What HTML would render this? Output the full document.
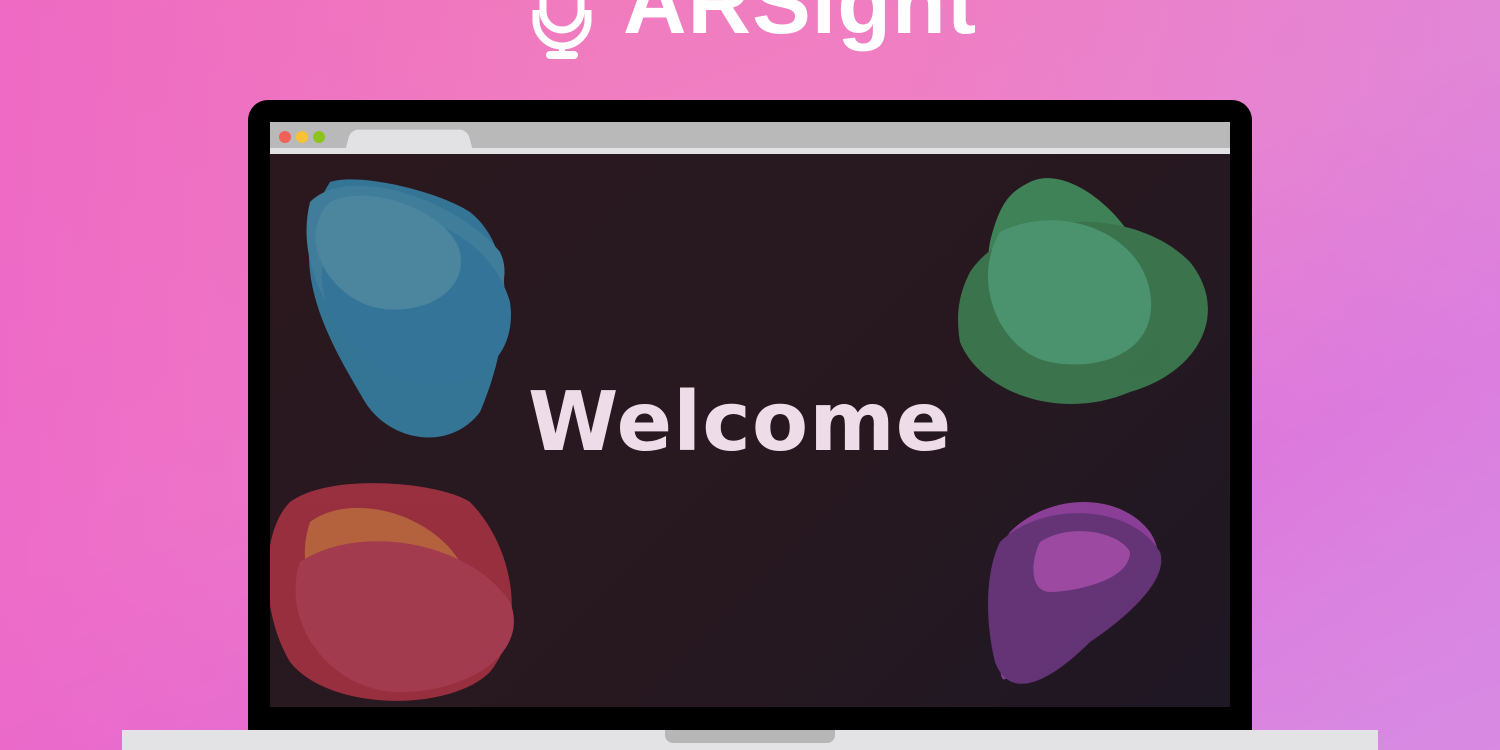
<!DOCTYPE html>
<html><head><style>
body{margin:0;width:1500px;height:750px;overflow:hidden;background:linear-gradient(160deg,#f27ab8 0%,#ee80c8 45%,#e070d8 70%,#d98ae0 100%);position:relative;font-family:"Liberation Sans",sans-serif}
.bg{position:absolute;inset:0;background:linear-gradient(90deg,rgba(236,99,200,.7) 0%,rgba(0,0,0,0) 40%,rgba(0,0,0,0) 60%,rgba(214,140,230,.5) 100%)}
.title{position:absolute;left:623px;top:-48px;font-size:88px;font-weight:bold;color:#fff;letter-spacing:1px}
.laptop{position:absolute;left:248px;top:100px;width:1004px;height:640px;background:#000;border-radius:20px 20px 0 0}
.screen{position:absolute;left:270px;top:122px;width:960px;height:585px;background:linear-gradient(135deg,#2a181e,#271820 60%,#1e1724);overflow:hidden}
.bar{position:absolute;left:0;top:0;width:960px;height:26px;background:#b9b9b9}
.strip{position:absolute;left:0;top:26px;width:960px;height:6px;background:#e2e2e4}
.tab{position:absolute;left:78px;top:7px;width:122px;height:22px;background:#e2e2e4;border-radius:8px 8px 0 0;transform:perspective(40px) rotateX(10deg)}
.dot{position:absolute;top:9px;width:12px;height:12px;border-radius:50%}
.base{position:absolute;left:122px;top:730px;width:1256px;height:20px;background:#e3e3e5}
.notch{position:absolute;left:665px;top:730px;width:170px;height:13px;background:#b6b6b6;border-radius:0 0 8px 8px}
.welcome{position:absolute;left:528px;top:375px;font-family:"DejaVu Sans",sans-serif;font-weight:bold;font-size:82px;color:#eedde8;letter-spacing:1px}
</style></head><body>
<div class="bg"></div>
<svg style="position:absolute;left:530px;top:0" width="70" height="62" viewBox="0 0 70 62"><rect x="13" y="-25" width="38" height="55" rx="19" fill="none" stroke="#fff" stroke-width="7"/><path d="M6 10 v10 a26 26 0 0 0 52 0 v-10" fill="none" stroke="#fff" stroke-width="7"/><rect x="29" y="44" width="6" height="10" fill="#fff"/><rect x="16" y="51" width="32" height="8" rx="4" fill="#fff"/></svg>
<div class="title">ARSight</div>
<div class="laptop"></div>
<div class="screen">
<div class="bar"></div><div class="strip"></div><div class="tab"></div>
<div class="dot" style="left:9px;background:#f2605a"></div>
<div class="dot" style="left:26px;background:#f8c234"></div>
<div class="dot" style="left:43px;background:#8cc41c"></div>
<svg style="position:absolute;left:0;top:0" width="960" height="585">
<g opacity=".7">
<path d="M60 60 C90 50 170 70 200 90 C250 130 240 220 210 290 C180 330 120 320 95 280 C60 220 10 140 60 60Z" fill="#3a9cc8"/>
<path d="M40 80 C80 40 190 80 230 130 C250 170 200 230 150 240 C90 250 20 160 40 80Z" fill="#4aa8d0"/>
<path d="M70 110 C130 70 220 110 240 180 C250 250 180 280 120 250 C60 220 30 150 70 110Z" fill="#3a9ccc"/>
<path d="M60 80 C100 60 180 90 190 130 C200 180 130 200 90 180 C50 160 30 110 60 80Z" fill="#5ab4d4"/>
</g>
<g opacity=".7">
<path d="M760 60 C800 40 870 100 880 160 C890 220 850 250 800 240 C740 230 710 170 720 120 C730 80 740 70 760 60Z" fill="#4cb070"/>
<path d="M700 150 C740 90 860 80 920 140 C960 190 930 250 860 270 C790 300 710 270 690 220 C685 190 690 170 700 150Z" fill="#449a60"/>
<path d="M730 110 C790 80 870 110 880 170 C890 230 830 250 780 240 C730 230 700 160 730 110Z" fill="#5cc890"/>
</g>
<g opacity=".7">
<path d="M20 380 C60 350 170 360 200 380 C240 420 260 500 220 550 C180 590 60 590 20 540 C-10 490 -10 410 20 380Z" fill="#c83a4e"/>
<path d="M40 400 C80 370 160 390 190 440 C210 490 170 520 120 520 C60 520 20 460 40 400Z" fill="#f0804a"/>
<path d="M30 440 C90 400 200 420 240 480 C260 530 200 570 130 570 C60 570 10 500 30 440Z" fill="#d84a64"/>
</g>
<g opacity=".7">
<path d="M740 410 C780 370 850 370 880 410 C900 440 880 470 840 470 C800 470 760 470 750 520 C740 560 730 570 730 540 C720 490 720 440 740 410Z" fill="#b850c8"/>
<path d="M730 420 C770 380 860 380 890 430 C900 460 850 500 820 520 C780 560 740 580 725 540 C715 500 715 450 730 420Z" fill="#80409a"/>
<path d="M770 420 C800 400 850 410 860 430 C860 460 800 470 780 470 C760 470 760 440 770 420Z" fill="#d060d8"/>
</g>
</svg>
</div>
<div class="welcome">Welcome</div>
<div class="base"></div><div class="notch"></div>
</body></html>
